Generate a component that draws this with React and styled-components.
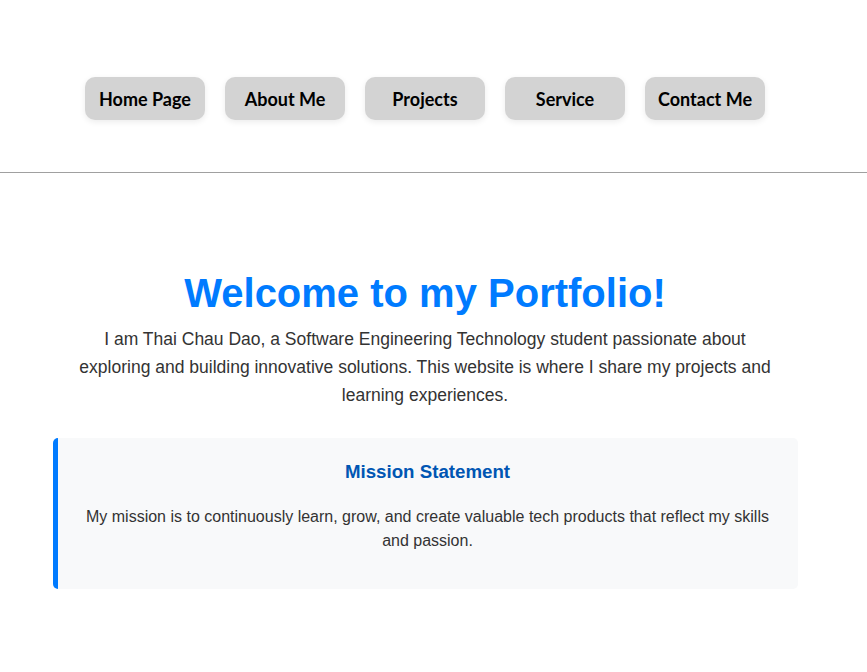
import React from "react";
import styled, { createGlobalStyle } from "styled-components";

const Global = createGlobalStyle`
  html, body { margin: 0; padding: 0; background: #fff; }
  body { font-family: "Liberation Sans", Arial, sans-serif; color: #333; }
`;

const Page = styled.div`
  width: 100%;
`;

const Header = styled.header`
  border-bottom: 1px solid #a0a0a0;
  padding: 77px 17px 52px 0;
`;

const Nav = styled.nav`
  display: flex;
  justify-content: center;
  gap: 20px;
`;

const NavButton = styled.a`
  display: flex;
  align-items: center;
  justify-content: center;
  width: 120px;
  height: 43px;
  background: #d3d3d3;
  border-radius: 10px;
  box-shadow: 0 2px 6px rgba(0, 0, 0, 0.08);
  color: #000;
  font-family: "Lato", "Open Sans", sans-serif;
  font-weight: 700;
  font-size: 18px;
  text-decoration: none;
  padding-top: 1px;
  box-sizing: border-box;
`;

const Main = styled.main`
  display: flex;
  flex-direction: column;
  align-items: center;
  padding: 96px 17px 0 0;
`;

const Title = styled.h1`
  margin: 0;
  color: #007bff;
  font-size: 40px;
  font-weight: 700;
  line-height: 48px;
  text-align: center;
`;

const Intro = styled.p`
  margin: 8px 0 0;
  max-width: 700px;
  font-size: 17.5px;
  line-height: 28px;
  text-align: center;
  color: #333;
`;

const Mission = styled.section`
  margin-top: 29px;
  width: 745px;
  box-sizing: border-box;
  background: #f8f9fa;
  border-left: 5px solid #007bff;
  border-radius: 5px;
  padding: 20px 25px 36px;
  text-align: center;
`;

const MissionTitle = styled.h3`
  margin: 0;
  color: #0056b3;
  font-size: 18.7px;
  line-height: 28px;
`;

const MissionText = styled.p`
  margin: 19px 0 0;
  font-size: 16px;
  line-height: 24px;
  color: #333;
`;

const links = ["Home Page", "About Me", "Projects", "Service", "Contact Me"];

export default function App() {
  return (
    <Page>
      <Global />
      <Header>
        <Nav>
          {links.map((l) => (
            <NavButton key={l} href="#">
              {l}
            </NavButton>
          ))}
        </Nav>
      </Header>
      <Main>
        <Title>Welcome to my Portfolio!</Title>
        <Intro>
          I am Thai Chau Dao, a Software Engineering Technology student passionate about
          exploring and building innovative solutions. This website is where I share my
          projects and learning experiences.
        </Intro>
        <Mission>
          <MissionTitle>Mission Statement</MissionTitle>
          <MissionText>
            My mission is to continuously learn, grow, and create valuable tech products that
            reflect my skills and passion.
          </MissionText>
        </Mission>
      </Main>
    </Page>
  );
}
